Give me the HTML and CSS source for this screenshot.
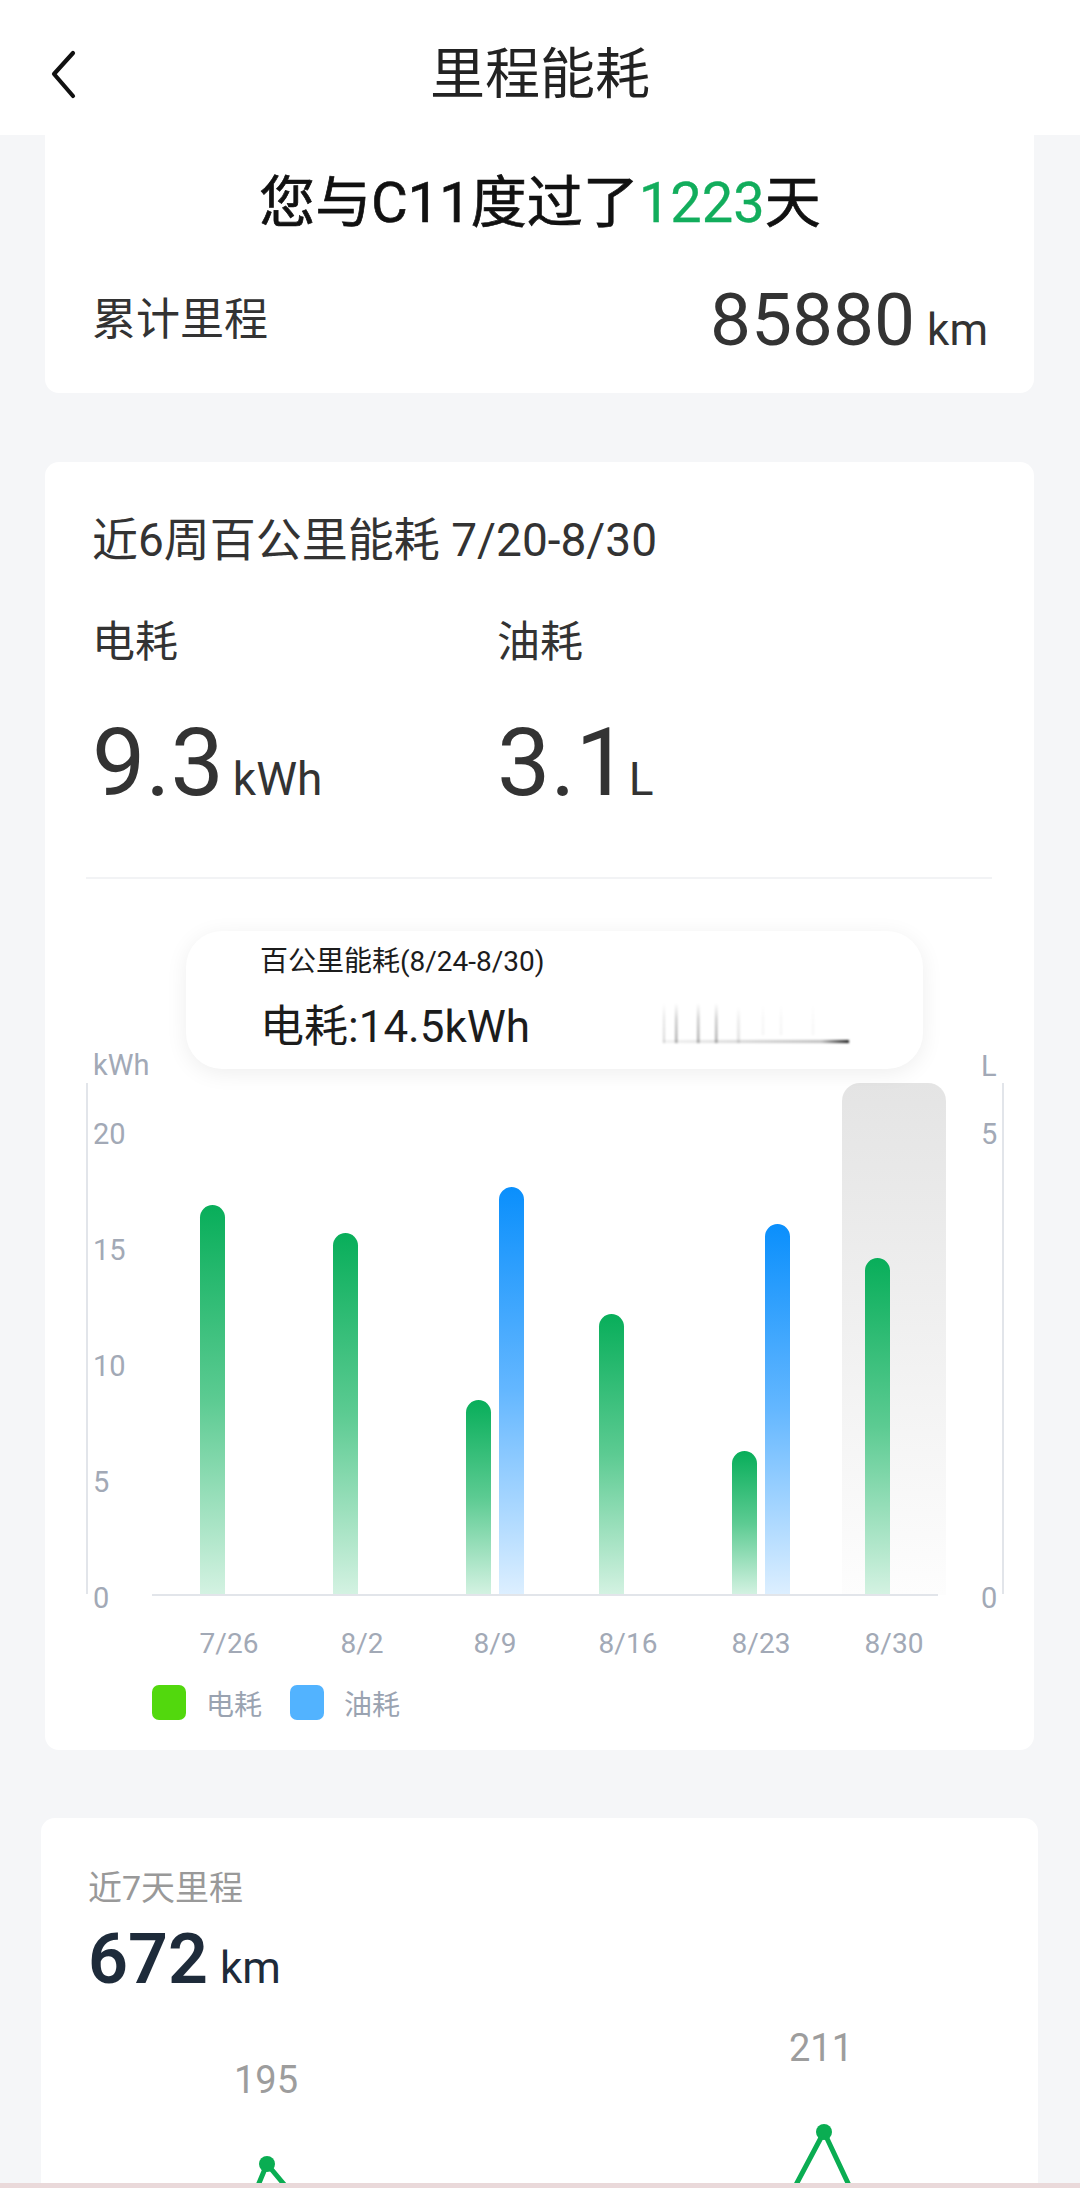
FILE: index.html
```html
<!DOCTYPE html>
<html lang="zh-CN">
<head>
<meta charset="utf-8">
<title>里程能耗</title>
<link rel="stylesheet" href="styles.css">
</head>
<body>
<header class="topbar">
  <div class="back">
    <svg width="40" height="60" viewBox="0 0 40 60"><path d="M26 9 L7 30 L26 52" fill="none" stroke="#111" stroke-width="4.2" stroke-linecap="round" stroke-linejoin="round"/></svg>
  </div>
  <h1 class="title">里程能耗</h1>
  <div></div>
</header>

<section class="card card-summary">
  <p class="headline">您与C11度过了<span class="green">1223</span>天</p>
  <div class="total-row">
    <span class="total-label">累计里程</span>
    <span class="total-val"><span class="total-num">85880</span><span class="total-unit">km</span></span>
  </div>
</section>

<section class="card card-energy">
  <p class="energy-title">近6周百公里能耗 7/20-8/30</p>
  <div class="metrics">
    <div class="metric">
      <div class="metric-label">电耗</div>
      <div class="metric-val"><span class="metric-num">9.3</span><span class="metric-unit">kWh</span></div>
    </div>
    <div class="metric">
      <div class="metric-label">油耗</div>
      <div class="metric-val"><span class="metric-num">3.1</span><span class="metric-unit unit-l">L</span></div>
    </div>
  </div>
  <div class="divider"></div>

  <svg class="bar-chart" width="989" height="786" viewBox="45 879 989 786">
    <defs>
      <linearGradient id="gGreen" x1="0" y1="0" x2="0" y2="1">
        <stop offset="0" stop-color="#08ae5a"/>
        <stop offset="0.5" stop-color="#5ccb92"/>
        <stop offset="1" stop-color="#d4f2e2"/>
      </linearGradient>
      <linearGradient id="gBlue" x1="0" y1="0" x2="0" y2="1">
        <stop offset="0" stop-color="#0a8ffc"/>
        <stop offset="0.5" stop-color="#64b7ff"/>
        <stop offset="1" stop-color="#ddefff"/>
      </linearGradient>
      <linearGradient id="gHi" x1="0" y1="0" x2="0" y2="1">
        <stop offset="0" stop-color="#e4e4e4"/>
        <stop offset="1" stop-color="#fdfdfd"/>
      </linearGradient>
    </defs>
    <line x1="87" y1="1083" x2="87" y2="1594" stroke="#e2e5ea" stroke-width="2"/>
    <line x1="1003" y1="1083" x2="1003" y2="1594" stroke="#e2e5ea" stroke-width="2"/>
    <path d="M842 1595V1101A18 18 0 0 1 860 1083H928A18 18 0 0 1 946 1101V1595Z" fill="url(#gHi)"/>

    <g class="axis-text">
      <text x="93" y="1075">kWh</text>
      <text x="93" y="1144">20</text>
      <text x="93" y="1260">15</text>
      <text x="93" y="1376">10</text>
      <text x="93" y="1492">5</text>
      <text x="93" y="1608">0</text>
      <text x="981" y="1076">L</text>
      <text x="981" y="1144">5</text>
      <text x="981" y="1608">0</text>
    </g>

    <path d="M200 1595V1217.5A12.5 12.5 0 0 1 225 1217.5V1595Z" fill="url(#gGreen)"/>
    <path d="M333 1595V1245.5A12.5 12.5 0 0 1 358 1245.5V1595Z" fill="url(#gGreen)"/>
    <path d="M466 1595V1412.5A12.5 12.5 0 0 1 491 1412.5V1595Z" fill="url(#gGreen)"/>
    <path d="M499 1595V1199.5A12.5 12.5 0 0 1 524 1199.5V1595Z" fill="url(#gBlue)"/>
    <path d="M599 1595V1326.5A12.5 12.5 0 0 1 624 1326.5V1595Z" fill="url(#gGreen)"/>
    <path d="M732 1595V1463.5A12.5 12.5 0 0 1 757 1463.5V1595Z" fill="url(#gGreen)"/>
    <path d="M765 1595V1236.5A12.5 12.5 0 0 1 790 1236.5V1595Z" fill="url(#gBlue)"/>
    <path d="M865 1595V1270.5A12.5 12.5 0 0 1 890 1270.5V1595Z" fill="url(#gGreen)"/>

    <line x1="152" y1="1595" x2="938" y2="1595" stroke="#e2e5ea" stroke-width="2"/>

    <g class="axis-text x-labels">
      <text x="229" y="1653">7/26</text>
      <text x="362" y="1653">8/2</text>
      <text x="495" y="1653">8/9</text>
      <text x="628" y="1653">8/16</text>
      <text x="761" y="1653">8/23</text>
      <text x="894" y="1653">8/30</text>
    </g>
  </svg>

  <div class="legend">
    <span class="swatch swatch-green"></span><span class="legend-label">电耗</span>
    <span class="swatch swatch-blue"></span><span class="legend-label">油耗</span>
  </div>

  <div class="tooltip">
    <div class="tip-title">百公里能耗(8/24-8/30)</div>
    <div class="tip-val">电耗:14.5kWh</div>
    <svg class="tip-ghost" width="190" height="44" viewBox="0 0 190 44">
      <defs>
        <linearGradient id="gGhost" x1="0" y1="0" x2="0" y2="1">
          <stop offset="0" stop-color="#000" stop-opacity="0"/>
          <stop offset="0.4" stop-color="#000" stop-opacity="0.2"/>
          <stop offset="1" stop-color="#000" stop-opacity="0.32"/>
        </linearGradient>
        <linearGradient id="gGhostH" x1="0" y1="0" x2="1" y2="0">
          <stop offset="0" stop-color="#000" stop-opacity="0.05"/>
          <stop offset="0.85" stop-color="#000" stop-opacity="0.25"/>
          <stop offset="0.93" stop-color="#000" stop-opacity="0.6"/>
          <stop offset="1" stop-color="#000" stop-opacity="0.9"/>
        </linearGradient>
      </defs>
      <rect x="1" y="2" width="2" height="40" fill="url(#gGhost)" opacity="0.5"/>
      <rect x="13" y="2" width="2.5" height="40" fill="url(#gGhost)"/>
      <rect x="35" y="2" width="2.5" height="40" fill="url(#gGhost)"/>
      <rect x="53" y="2" width="2.5" height="40" fill="url(#gGhost)"/>
      <rect x="75" y="6" width="3" height="36" fill="url(#gGhost)" opacity="0.35"/>
      <rect x="100" y="4" width="2" height="30" fill="url(#gGhost)" opacity="0.15"/>
      <rect x="118" y="4" width="2" height="30" fill="url(#gGhost)" opacity="0.15"/>
      <rect x="150" y="4" width="2" height="30" fill="url(#gGhost)" opacity="0.12"/>
      <rect x="1" y="39" width="186" height="3" fill="url(#gGhostH)"/>
    </svg>
  </div>
</section>

<section class="card card-week">
  <p class="week-title">近7天里程</p>
  <div class="week-val"><span class="week-num">672</span><span class="week-unit">km</span></div>
  <svg class="line-chart" width="997" height="260" viewBox="41 2001 997 260">
    <text class="pt-label" x="266" y="2093">195</text>
    <text class="pt-label" x="821" y="2061">211</text>
    <polyline points="226,2262 267,2164 349,2262" fill="none" stroke="#0aad52" stroke-width="5" stroke-linejoin="round"/>
    <polyline points="755,2262 824,2132 885,2262" fill="none" stroke="#0aad52" stroke-width="5" stroke-linejoin="round"/>
    <circle cx="267" cy="2164" r="8" fill="#0aad52"/>
    <circle cx="824" cy="2132" r="8" fill="#0aad52"/>
  </svg>
</section>

<div class="bottom-strip"></div>
</body>
</html>
```

FILE: styles.css
```css
* { box-sizing: border-box; }

html, body {
  margin: 0;
  padding: 0;
}

body {
  width: 1080px;
  height: 2188px;
  overflow: hidden;
  background: #f5f6f8;
  font-family: "Roboto", "Noto Sans CJK SC", sans-serif;
  color: #333;
}

p { margin: 0; }

.topbar {
  height: 135px;
  padding-top: 12px;
  background: #fff;
  display: grid;
  grid-template-columns: 1fr auto 1fr;
  align-items: center;
}

.back {
  padding-left: 47px;
  display: flex;
  align-items: center;
}

.back svg { display: block; }

.title {
  margin: 0;
  font-size: 55px;
  font-weight: 400;
  color: #222;
  line-height: 70px;
}

.card {
  background: #fff;
  border-radius: 14px;
  margin: 0 46px 0 45px;
}

.card-summary {
  border-radius: 0 0 14px 14px;
  padding: 38px 46px 33px 47px;
}

.headline {
  text-align: center;
  font-size: 56px;
  font-weight: 400;
  -webkit-text-stroke: 0.7px #111;
  line-height: 60px;
  color: #111;
}

.green {
  color: #12ad5c;
  -webkit-text-stroke: 0.3px #12ad5c;
}

.total-row {
  margin-top: 47px;
  height: 80px;
  display: flex;
  justify-content: space-between;
  align-items: center;
}

.total-label {
  font-size: 44px;
  line-height: 80px;
  color: #333;
}

.total-val {
  display: flex;
  align-items: baseline;
  line-height: 80px;
}

.total-num {
  font-size: 73px;
  color: #333;
}

.total-unit {
  font-size: 44px;
  line-height: 1;
  margin-left: 12px;
  color: #333;
}

.card-energy {
  position: relative;
  margin-top: 69px;
  padding: 48px 42px 30px 47px;
}

.energy-title {
  font-size: 46px;
  line-height: 60px;
  color: #333;
}

.metrics {
  display: flex;
  margin-top: 42px;
}

.metric {
  width: 405px;
}

.metric-label {
  font-size: 43px;
  line-height: 60px;
  color: #333;
}

.metric-val {
  margin-top: 36px;
  display: flex;
  align-items: baseline;
  height: 110px;
  line-height: 110px;
}

.metric-num {
  font-size: 95px;
  color: #333;
}

.metric-unit {
  font-size: 46px;
  line-height: 1;
  margin-left: 9px;
  color: #333;
}

.unit-l {
  margin-left: 0;
}

.divider {
  margin-top: 59px;
  margin-left: -6px;
  height: 2px;
  background: #f2f3f5;
}

.bar-chart {
  display: block;
  margin-left: -47px;
}

.axis-text text {
  font-family: "Roboto", sans-serif;
  font-size: 29px;
  fill: #a2a9b6;
}

.x-labels text {
  text-anchor: middle;
  font-size: 28px;
}

.legend {
  margin-top: 20px;
  margin-left: 60px;
  height: 35px;
  display: flex;
  align-items: center;
}

.swatch {
  width: 34px;
  height: 35px;
  border-radius: 7px;
}

.swatch-green { background: #52d80d; }
.swatch-blue { background: #52b3ff; margin-left: 28px; }

.legend-label {
  margin-left: 20px;
  font-size: 28px;
  color: #9aa3b1;
}

.tooltip {
  position: absolute;
  left: 141px;
  top: 469px;
  width: 737px;
  height: 138px;
  background: #fff;
  border-radius: 36px;
  box-shadow: 0 4px 22px rgba(0, 0, 0, 0.07);
  padding: 14px 0 0 74px;
}

.tip-title {
  font-size: 28px;
  line-height: 34px;
  color: #1c1c1c;
}

.tip-val {
  margin-top: 20px;
  font-size: 44px;
  line-height: 56px;
  color: #1c1c1c;
}

.tip-ghost {
  position: absolute;
  left: 476px;
  top: 70px;
  filter: blur(0.8px);
}

.card-week {
  margin: 68px 42px 0 41px;
  padding: 46px 0 0 47px;
  border-radius: 14px 14px 0 0;
}

.week-title {
  font-size: 34px;
  line-height: 48px;
  color: #999;
}

.week-val {
  margin-top: 5px;
  display: flex;
  align-items: baseline;
  height: 84px;
  line-height: 84px;
  color: #1e2b3a;
}

.week-num {
  font-size: 70px;
  font-weight: 600;
}

.week-unit {
  font-size: 44px;
  line-height: 1;
  margin-left: 12px;
}

.line-chart {
  display: block;
  margin-left: -47px;
}

.pt-label {
  font-family: "Roboto", sans-serif;
  font-size: 38px;
  fill: #9d9d9d;
  text-anchor: middle;
}

.bottom-strip {
  position: fixed;
  left: 0;
  bottom: 0;
  width: 100%;
  height: 5px;
  background: #ead9da;
}
```
